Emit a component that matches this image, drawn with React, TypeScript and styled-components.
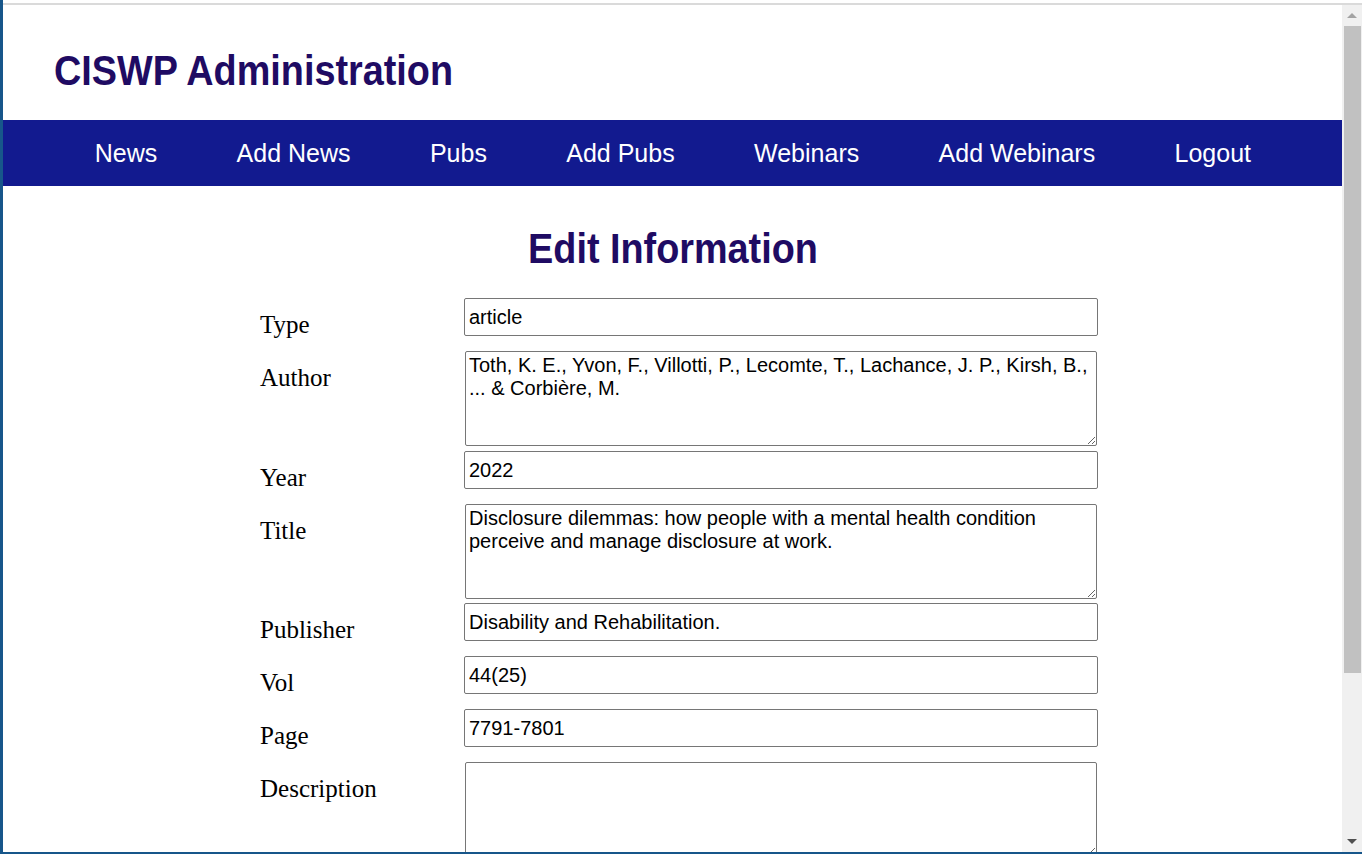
import React from 'react';
import styled, { createGlobalStyle } from 'styled-components';

const GlobalStyle = createGlobalStyle`
  html, body {
    margin: 0;
    padding: 0;
    background: #ffffff;
    overflow: hidden;
  }
`;

// gap = space below the field before the next row
const fields = [
  { label: 'Type', value: 'article', multi: false, gap: 15 },
  {
    label: 'Author',
    value:
      'Toth, K. E., Yvon, F., Villotti, P., Lecomte, T., Lachance, J. P., Kirsh, B., ... & Corbière, M.',
    multi: true,
    gap: 5,
  },
  { label: 'Year', value: '2022', multi: false, gap: 15 },
  {
    label: 'Title',
    value:
      'Disclosure dilemmas: how people with a mental health condition perceive and manage disclosure at work.',
    multi: true,
    gap: 4,
  },
  { label: 'Publisher', value: 'Disability and Rehabilitation.', multi: false, gap: 15 },
  { label: 'Vol', value: '44(25)', multi: false, gap: 15 },
  { label: 'Page', value: '7791-7801', multi: false, gap: 15 },
  { label: 'Description', value: '', multi: true, gap: 5 },
];

const navItems = ['News', 'Add News', 'Pubs', 'Add Pubs', 'Webinars', 'Add Webinars', 'Logout'];

const App = () => {
  return (
    <Window>
      <GlobalStyle />
      <TopStrip />
      <Viewport>
        <Page>
          <Header>
            <SiteTitle>CISWP Administration</SiteTitle>
          </Header>
          <Nav>
            {navItems.map((item) => (
              <NavLink key={item} href="#">
                {item}
              </NavLink>
            ))}
          </Nav>
          <HeadingWrap>
            <Heading>Edit Information</Heading>
          </HeadingWrap>
          <Form onSubmit={(e) => e.preventDefault()}>
            {fields.map((f) => (
              <Row key={f.label} $gap={f.gap}>
                <Label>{f.label}</Label>
                {f.multi ? (
                  <TextArea defaultValue={f.value} />
                ) : (
                  <TextInput type="text" defaultValue={f.value} />
                )}
              </Row>
            ))}
          </Form>
        </Page>
        <Scrollbar>
          <ArrowButton>
            <ArrowUp />
          </ArrowButton>
          <Thumb />
          <Track />
          <ArrowButton>
            <ArrowDown />
          </ArrowButton>
        </Scrollbar>
      </Viewport>
    </Window>
  );
};

// Styled Components
const Window = styled.div`
  box-sizing: border-box;
  width: 1362px;
  height: 854px;
  display: flex;
  flex-direction: column;
  border-left: 3px solid #17568a;
  border-bottom: 2px solid #17568a;
  overflow: hidden;
`;

const TopStrip = styled.div`
  height: 3px;
  flex-shrink: 0;
  border-bottom: 2px solid #dadada;
`;

const Viewport = styled.div`
  flex: 1;
  display: flex;
  min-height: 0;
`;

const Page = styled.div`
  flex: 1;
  overflow: hidden;
  background: #ffffff;
`;

const Header = styled.header`
  height: 115px;
  box-sizing: border-box;
  padding: 42px 0 0 51px;
`;

// narrow bold heading face, approximated by squeezing Liberation Sans Bold
const SiteTitle = styled.h1`
  display: inline-block;
  margin: 0;
  font-family: 'Liberation Sans', Arial, sans-serif;
  font-weight: bold;
  font-size: 42px;
  color: #1f0b63;
  transform: scaleX(0.9);
  transform-origin: left center;
`;

const Nav = styled.nav`
  height: 66px;
  display: flex;
  align-items: center;
  padding-left: 52px;
  background-color: #121a8f;
`;

const NavLink = styled.a`
  padding: 0 39.7px;
  font-family: 'Liberation Sans', Arial, sans-serif;
  font-size: 25px;
  color: #ffffff;
  text-decoration: none;
`;

const HeadingWrap = styled.div`
  margin: 39px 0 25px;
  text-align: center;
`;

const Heading = styled.h2`
  display: inline-block;
  margin: 0;
  font-family: 'Liberation Sans', Arial, sans-serif;
  font-weight: bold;
  font-size: 42px;
  color: #1f0b63;
  transform: scaleX(0.9);
`;

const Form = styled.form`
  width: 838px;
  margin-left: 257px;
`;

const Row = styled.div<{ $gap: number }>`
  display: grid;
  grid-template-columns: 204px 634px;
  align-items: start;
  margin-bottom: ${(p) => p.$gap}px;
`;

const Label = styled.label`
  padding-top: 15px;
  line-height: 23px;
  font-family: 'Liberation Serif', 'Times New Roman', serif;
  font-size: 25px;
  color: #000000;
`;

const TextInput = styled.input`
  box-sizing: border-box;
  width: 634px;
  height: 38px;
  margin: 0;
  padding: 1px 4px;
  font-family: 'Liberation Sans', Arial, sans-serif;
  font-size: 20px;
  color: #000000;
  border: 1px solid #767676;
  border-radius: 2px;
`;

const TextArea = styled.textarea`
  box-sizing: border-box;
  width: 632px;
  height: 95px;
  margin: 0 1px;
  padding: 2px 3px;
  font-family: 'Liberation Sans', Arial, sans-serif;
  font-size: 20px;
  color: #000000;
  border: 1px solid #767676;
  border-radius: 2px;
`;

const Scrollbar = styled.div`
  width: 20px;
  flex-shrink: 0;
  display: flex;
  flex-direction: column;
  background-color: #f0f0f0;
`;

const ArrowButton = styled.div`
  height: 21px;
  display: flex;
  align-items: center;
  justify-content: center;
`;

const ArrowUp = styled.div`
  width: 0;
  height: 0;
  border-left: 5px solid transparent;
  border-right: 5px solid transparent;
  border-bottom: 5px solid #a3a3a3;
`;

const ArrowDown = styled.div`
  width: 0;
  height: 0;
  border-left: 5px solid transparent;
  border-right: 5px solid transparent;
  border-top: 5px solid #505050;
`;

const Thumb = styled.div`
  height: 647px;
  margin: 0 1px 0 2px;
  background-color: #c1c1c1;
`;

const Track = styled.div`
  flex: 1;
`;

export default App;
